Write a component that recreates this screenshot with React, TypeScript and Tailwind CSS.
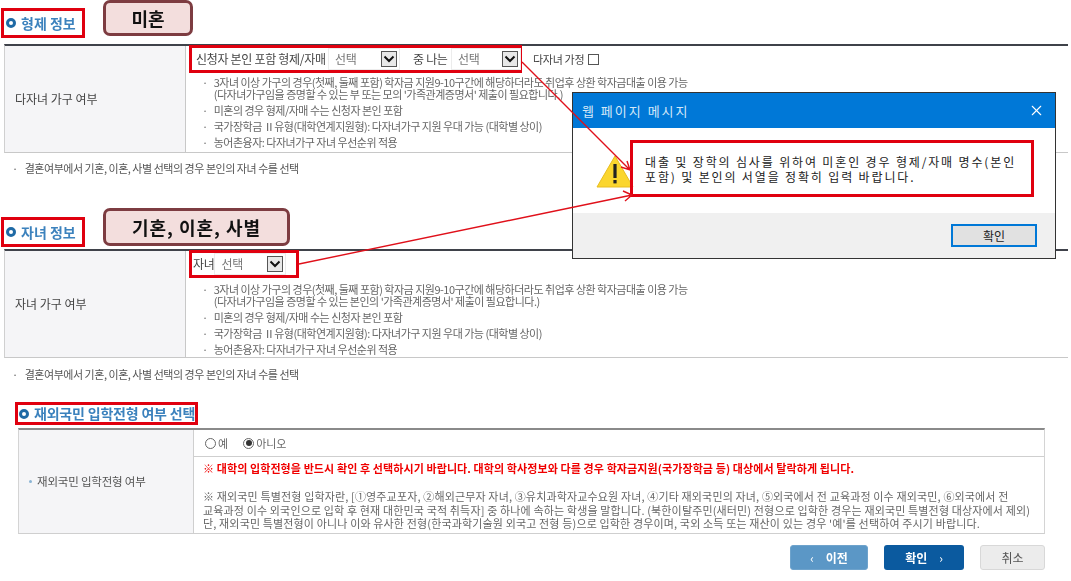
import { X } from 'lucide-react'

const FONT = "font-['Noto_Sans_CJK_KR','Noto_Sans',sans-serif]"

function Ring() {
  return <span className="w-[10px] h-[10px] rounded-full border-[3px] border-[#1f6aa5] bg-white shrink-0" />
}

function Title({ text, className }: { text: string; className: string }) {
  return (
    <div className={`flex items-center gap-[5px] border-[3px] border-[#e0000f] font-bold text-[#3c82bd] whitespace-nowrap overflow-hidden ${className}`}>
      <Ring />
      <span>{text}</span>
    </div>
  )
}

function Badge({ text, className }: { text: string; className: string }) {
  return (
    <div className={`flex items-center justify-center bg-[#f3dedd] border-[3px] border-[#7d3c41] rounded-[7px] text-[18px] font-bold text-[#111] ${className}`}>
      {text}
    </div>
  )
}

function Select({ className }: { className: string }) {
  return (
    <div className={`flex items-center justify-between shrink-0 h-[22px] bg-white border border-[#ececec] pl-[6px] pr-[2px] text-[12px] text-[#777] ${className}`}>
      <span>선택</span>
      <span className="w-[16px] h-[16px] bg-[#e8e8e8] border border-[#555] flex items-center justify-center">
        <svg width="12" height="8" viewBox="0 0 12 8" fill="none">
          <path d="M1.5 1.5 L6 6 L10.5 1.5" stroke="#111" strokeWidth="2" />
        </svg>
      </span>
    </div>
  )
}

function Bullets({ second }: { second: string }) {
  return (
    <ul className="ml-[16px] flex flex-col gap-[4px] text-[11px] leading-[12px] text-[#666] tracking-[-0.5px]">
      <li className="flex gap-[6px]">
        <span>·</span>
        <span>
          3자녀 이상 가구의 경우(첫째, 둘째 포함) 학자금 지원9-10구간에 해당하더라도 취업후 상환 학자금대출 이용 가능
          <br />
          {second}
        </span>
      </li>
      <li className="flex gap-[6px]"><span>·</span><span>미혼의 경우 형제/자매 수는 신청자 본인 포함</span></li>
      <li className="flex gap-[6px]"><span>·</span><span>국가장학금 Ⅱ유형(대학연계지원형): 다자녀가구 지원 우대 가능 (대학별 상이)</span></li>
      <li className="flex gap-[6px]"><span>·</span><span>농어촌융자: 다자녀가구 자녀 우선순위 적용</span></li>
    </ul>
  )
}

function FamilyTable({ label, children }: { label: string; children: React.ReactNode }) {
  return (
    <div className="ml-[4px] w-[1064px] h-[109px] flex border-t-2 border-t-[#3f424a] border-b border-b-[#c8c8c8] border-l border-l-[#d0d0d0]">
      <div className="w-[181px] shrink-0 bg-[#f5f5f7] border-r border-r-[#c8c8c8] flex items-center pl-[10px] text-[12px] text-[#444]">
        {label}
      </div>
      <div className="flex-1 min-w-0">{children}</div>
    </div>
  )
}

function Note() {
  return (
    <div className="ml-[12px] flex gap-[7px] text-[11px] leading-[12px] text-[#555] tracking-[-0.47px]">
      <span>·</span>
      <span>결혼여부에서 기혼, 이혼, 사별 선택의 경우 본인의 자녀 수를 선택</span>
    </div>
  )
}

function Radio({ on, label }: { on: boolean; label: string }) {
  return (
    <span className="flex items-center gap-[2px]">
      <span className="w-[11px] h-[11px] rounded-full border border-[#666] bg-white flex items-center justify-center">
        {on && <span className="w-[6px] h-[6px] rounded-full bg-[#333]" />}
      </span>
      <span>{label}</span>
    </span>
  )
}

export default function App() {
  return (
    <div className={`relative w-[1071px] h-[581px] overflow-hidden bg-white ${FONT}`}>
      <div className="blur-[0.4px]">
        {/* 형제 정보 */}
        <div className="h-[44px] flex items-start pl-[1px]">
          <Title text="형제 정보" className="mt-[8px] w-[84px] h-[30px] pl-[2px] text-[14px]" />
          <Badge text="미혼" className="ml-[18px] w-[90px] h-[36px]" />
        </div>
        <FamilyTable label="다자녀 가구 여부">
          <div className="flex items-center">
            <div className="ml-[3px] mt-[-1px] w-[333px] h-[28px] border-[3px] border-[#e0000f] flex items-center pl-[4px] text-[12px] text-[#444] tracking-[-0.3px] whitespace-nowrap">
              <span className="w-[131px] shrink-0">신청자 본인 포함 형제/자매</span>
              <Select className="ml-[1px] w-[72px]" />
              <span className="ml-[13px] w-[36px] shrink-0">중 나는</span>
              <Select className="ml-[2px] w-[70px]" />
            </div>
            <span className="ml-[11px] text-[11px] text-[#444] tracking-[-0.3px]">다자녀 가정</span>
            <span className="ml-[4px] w-[11px] h-[11px] border border-[#555] bg-white" />
          </div>
          <div className="mt-[3px]">
            <Bullets second="(다자녀가구임을 증명할 수 있는 부 또는 모의 '가족관계증명서' 제출이 필요합니다.)" />
          </div>
        </FamilyTable>
        <div className="mt-[9px]"><Note /></div>

        {/* 자녀 정보 */}
        <div className="mt-[34px] h-[41px] flex items-start pl-[1px]">
          <Title text="자녀 정보" className="mt-[9px] w-[84px] h-[30px] pl-[2px] text-[14px]" />
          <Badge text="기혼, 이혼, 사별" className="ml-[18px] w-[187px] h-[38px] tracking-[1px]" />
        </div>
        <FamilyTable label="자녀 가구 여부">
          <div className="ml-[3px] mt-[-1px] w-[110px] h-[28px] border-[3px] border-[#e0000f] flex items-center pl-[1px] text-[12px] text-[#444] tracking-[-0.3px]">
            <span>자녀</span>
            <Select className="w-[72px]" />
          </div>
          <div className="mt-[5px]">
            <Bullets second="(다자녀가구임을 증명할 수 있는 본인의 '가족관계증명서' 제출이 필요합니다.)" />
          </div>
        </FamilyTable>
        <div className="mt-[10px]"><Note /></div>

        {/* 재외국민 */}
        <div className="mt-[22px] ml-[15px]">
          <Title text="재외국민 입학전형 여부 선택" className="w-[183px] h-[23px] pl-[1px] text-[14px] tracking-[-0.2px]" />
        </div>
        <div className="mt-[3px] ml-[18px] w-[1027px] h-[106px] flex border-t-2 border-t-[#8a8a8a] border-b border-b-[#cfcfcf] border-x border-x-[#d4d4d4]">
          <div className="w-[175px] shrink-0 bg-[#f5f5f7] border-r border-r-[#cfcfcf] flex items-center pl-[10px] gap-[5px] text-[11.5px] text-[#555] tracking-[-0.2px]">
            <span className="w-[3px] h-[3px] rounded-full bg-[#8ab4d4]" />
            <span>재외국민 입학전형 여부</span>
          </div>
          <div className="flex-1 min-w-0 flex flex-col">
            <div className="h-[27px] border-b border-b-[#cfcfcf] flex items-center gap-[15px] pl-[11px] text-[11px] text-[#666]">
              <Radio on={false} label="예" />
              <Radio on label="아니오" />
            </div>
            <p className="mt-[5px] pl-[9px] text-[11px] leading-[13px] font-bold text-[#f00000] tracking-[0.1px] whitespace-nowrap">
              ※ 대학의 입학전형을 반드시 확인 후 선택하시기 바랍니다. 대학의 학사정보와 다를 경우 학자금지원(국가장학금 등) 대상에서 탈락하게 됩니다.
            </p>
            <p className="mt-[15px] pl-[9px] text-[11px] leading-[13.5px] text-[#666] tracking-[0.15px] whitespace-nowrap">
              ※ 재외국민 특별전형 입학자란, [①영주교포자, ②해외근무자 자녀, ③유치과학자교수요원 자녀, ④기타 재외국민의 자녀, ⑤외국에서 전 교육과정 이수 재외국민, ⑥외국에서 전
              <br />
              교육과정 이수 외국인으로 입학 후 현재 대한민국 국적 취득자] 중 하나에 속하는 학생을 말합니다. (북한이탈주민(새터민) 전형으로 입학한 경우는 재외국민 특별전형 대상자에서 제외)
              <br />
              단, 재외국민 특별전형이 아니나 이와 유사한 전형(한국과학기술원 외국고 전형 등)으로 입학한 경우이며, 국외 소득 또는 재산이 있는 경우 '예'를 선택하여 주시기 바랍니다.
            </p>
          </div>
        </div>

        {/* 버튼 */}
        <div className="mt-[11px] ml-[790px] w-[255px] flex justify-between text-[12px] font-bold">
          <button className="w-[78px] h-[25px] rounded-[3px] bg-[#5b97c6] border border-[#6ea3cc] text-white flex items-center justify-center gap-[12px]">
            <span className="font-normal">‹</span><span>이전</span>
          </button>
          <button className="w-[80px] h-[25px] rounded-[3px] bg-[#0b5a9f] text-white flex items-center justify-center gap-[12px]">
            <span>확인</span><span className="font-normal">›</span>
          </button>
          <button className="w-[65px] h-[25px] rounded-[3px] bg-[#ececec] border border-[#d8d8d8] text-[#555] font-normal">취소</button>
        </div>
      </div>

      {/* 웹 페이지 메시지 */}
      <div className="absolute left-[572px] top-[92px] w-[484px] h-[167px] border border-[#333] bg-white flex flex-col">
        <div className="h-[35px] bg-[#0078d7] flex items-center justify-between pl-[9px] pr-[10px] text-[13px] text-[#d5e8f7] tracking-[2px]">
          <span>웹 페이지 메시지</span>
          <X className="w-[17px] h-[17px] text-white" strokeWidth={1.5} />
        </div>
        <div className="flex-1 flex items-start pl-[23px] pt-[12px]">
          <svg className="mt-[15px] shrink-0" width="38" height="33" viewBox="0 0 38 33">
            <path d="M19 1 L37 32 L1 32 Z" fill="#fbd62e" stroke="#e8bd20" />
            <rect x="17.4" y="9" width="3.2" height="14" fill="#222" />
            <rect x="17.4" y="25" width="3.2" height="3.4" fill="#222" />
          </svg>
          <div className="ml-[-4px] w-[404px] h-[57px] border-[3px] border-[#e0000f] flex items-center pl-[12px] text-[12px] leading-[15px] text-[#222] tracking-[1.85px] whitespace-nowrap">
            <span>
              대출 및 장학의 심사를 위하여 미혼인 경우 형제/자매 명수(본인
              <br />
              포함) 및 본인의 서열을 정확히 입력 바랍니다.
            </span>
          </div>
        </div>
        <div className="h-[45px] bg-[#f0f0f0] flex items-center justify-end pr-[18px]">
          <button className="w-[86px] h-[23px] bg-[#e1e1e1] border-2 border-[#0078d7] text-[12px] text-[#222]">확인</button>
        </div>
      </div>

      {/* 화살표 */}
      <svg className="absolute inset-0 pointer-events-none" width="1071" height="581" viewBox="0 0 1071 581" fill="none">
        <path d="M522 62 L630 170 M621 167 L630 170 L627 161" stroke="#e0101a" strokeWidth="1.4" />
        <path d="M299 264 L632 195 M623 191 L632 195 L625 201" stroke="#e0101a" strokeWidth="1.4" />
      </svg>
    </div>
  )
}
